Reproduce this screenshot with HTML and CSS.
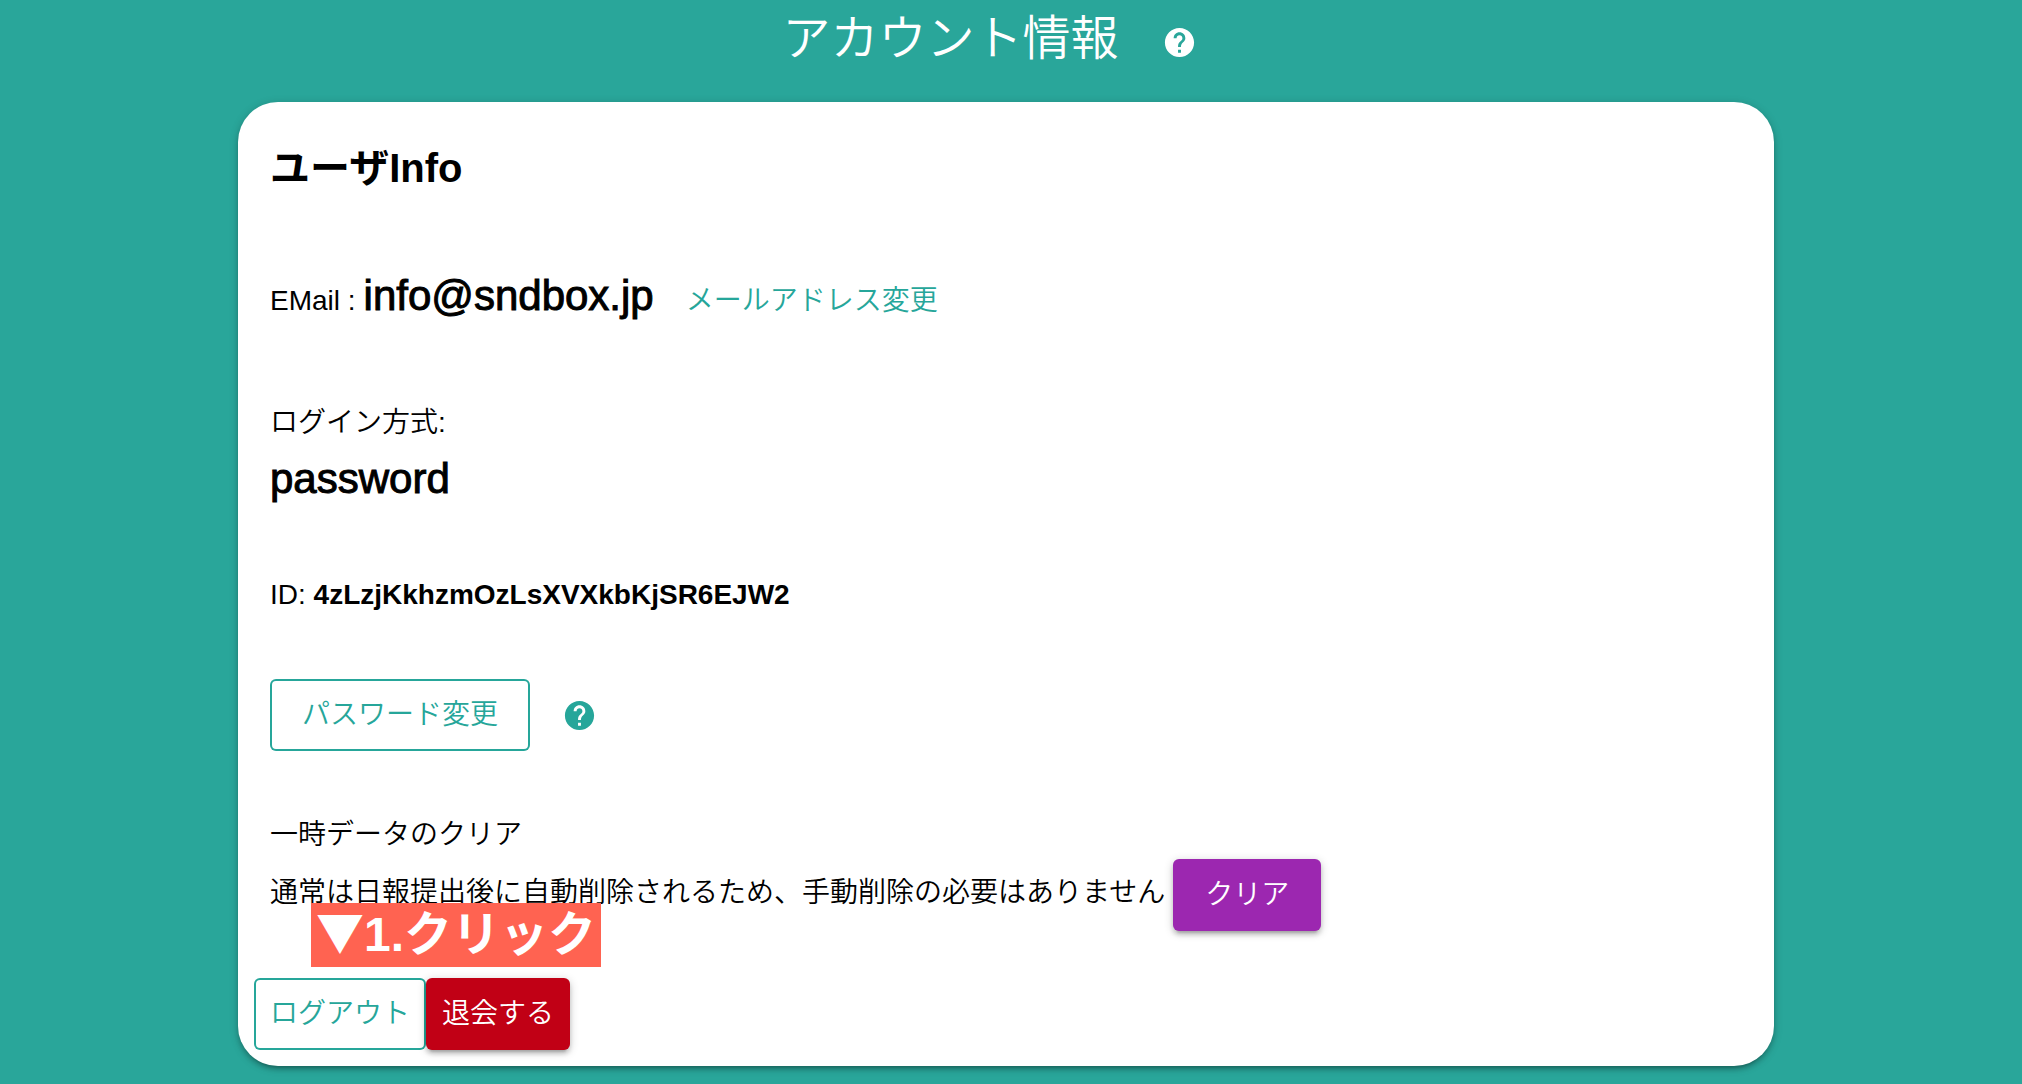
FILE: index.html
```html
<!DOCTYPE html>
<html lang="ja">
<head>
<meta charset="utf-8">
<meta name="viewport" content="width=device-width, initial-scale=1">
<title>アカウント情報</title>
<link rel="stylesheet" href="styles.css">
</head>
<body>
<svg class="sprite" aria-hidden="true">
  <symbol id="help" viewBox="0 0 24 24"><path d="M12 2C6.48 2 2 6.48 2 12s4.480 10 10 10 10-4.480 10-10S17.520 2 12 2zm1 17h-2v-2h2v2zm2.070-7.750l-.9.920C13.450 12.900 13 13.500 13 15h-2v-.5c0-1.100.450-2.100 1.170-2.830l1.240-1.260c.370-.360.590-.860.590-1.410 0-1.100-.9-2-2-2s-2 .9-2 2H8c0-2.210 1.790-4 4-4s4 1.790 4 4c0 .880-.360 1.680-.930 2.250z"/></symbol>
</svg>
<main class="page">
  <header class="page-header">
    <h1 class="page-title">アカウント情報</h1>
    <button class="help help-light" type="button" aria-label="ヘルプ"><svg class="icon"><use href="#help"/></svg></button>
  </header>
  <article class="card">
    <div class="card-body">
      <h2 class="card-title">ユーザInfo</h2>
      <div class="email">
        <span>EMail :</span>
        <span class="value">info@sndbox.jp</span>
        <a class="link" href="#email">メールアドレス変更</a>
      </div>
      <div class="login">
        <div>ログイン方式:</div>
        <div class="value">password</div>
      </div>
      <div class="user-id">ID: <strong class="id-value">4zLzjKkhzmOzLsXVXkbKjSR6EJW2</strong></div>
      <div class="password">
        <button class="button outline" type="button">パスワード変更</button>
        <button class="help help-teal" type="button" aria-label="ヘルプ"><svg class="icon"><use href="#help"/></svg></button>
      </div>
      <div class="clear-label">一時データのクリア</div>
      <div class="clear">
        <span class="clear-text">通常は日報提出後に自動削除されるため、手動削除の必要はありません</span>
        <button class="button accent" type="button">クリア</button>
      </div>
    </div>
    <footer class="actions">
      <button class="button outline compact" type="button">ログアウト</button>
      <button class="button danger compact" type="button">退会する</button>
      <div class="callout"><span class="marker">▼</span>1.クリック</div>
    </footer>
  </article>
</main>
</body>
</html>
```
FILE: styles.css
```css
* {
  box-sizing: border-box;
}

body {
  margin: 0;
  background: #29a69a;
  color: #000;
  font: 350 28px/56px "Liberation Sans", "Noto Sans CJK JP", sans-serif;
}

h1,
h2 {
  margin: 0;
}

.sprite {
  display: none;
}

.page {
  min-height: 100vh;
  padding: 0 10px 18px 0;
}

.page-header {
  display: flex;
  justify-content: center;
  align-items: flex-start;
  gap: 13px;
  height: 102px;
}

.page-title {
  margin-left: -3px;
  font-size: 48px;
  font-weight: 350;
  line-height: 78px;
  color: #fff;
}

.help {
  display: flex;
  padding: 0 30px;
  border: 0;
  background: none;
  cursor: pointer;
}

.help-light {
  padding-top: 25px;
  color: #fff;
}

.help-teal {
  padding: 0 32px;
  color: #26a69a;
}

.icon {
  width: 35px;
  height: 35px;
  fill: currentColor;
}

.card {
  width: 77%;
  max-width: 1536px;
  margin: 0 auto;
  border-radius: 40px;
  background: #fff;
  box-shadow: 0 2px 10px rgba(0, 0, 0, 0.2), 0 4px 4px rgba(0, 0, 0, 0.14), 0 6px 2px -4px rgba(0, 0, 0, 0.12);
}

.card-body {
  padding: 32px 32px 31px;
}

.card-title {
  font-size: 40px;
  font-weight: 700;
  line-height: 68px;
}

.email {
  display: flex;
  flex-wrap: wrap;
  align-items: baseline;
  gap: 8px;
  margin-top: 66px;
}

.value {
  font-size: 42px;
  -webkit-text-stroke: 1px currentColor;
}

.link {
  margin-left: 24px;
  color: #26a69a;
  text-decoration: none;
}

.login {
  margin-top: 66px;
}

.user-id {
  margin-top: 60px;
}

.id-value {
  font-weight: 700;
}

.password {
  display: flex;
  align-items: center;
  margin-top: 56px;
}

.clear-label {
  margin-top: 60px;
  line-height: 48px;
}

.clear {
  display: flex;
  align-items: flex-start;
  gap: 8px;
}

.clear-text {
  line-height: 68px;
}

.button {
  min-height: 72px;
  padding: 0 32px;
  border: 0;
  border-radius: 6px;
  font: inherit;
  white-space: nowrap;
  cursor: pointer;
}

.compact {
  padding: 0 16px;
}

.outline {
  background: #fff;
  color: #26a69a;
  box-shadow: inset 0 0 0 2px #26a69a;
}

.accent,
.danger {
  color: #fff;
  box-shadow: 0 2px 10px rgba(0, 0, 0, 0.2), 0 4px 4px rgba(0, 0, 0, 0.14), 0 6px 2px -4px rgba(0, 0, 0, 0.12);
}

.accent {
  background: #9c27b0;
}

.danger {
  background: #c10015;
}

.actions {
  position: relative;
  display: flex;
  padding: 16px;
}

/* Step marker that floats above the action buttons */
.callout {
  position: absolute;
  bottom: 100%;
  left: 73px;
  margin-bottom: -5px;
  padding: 0 5px;
  background: #ff6351;
  color: #fff;
  font-size: 48px;
  font-weight: 700;
  line-height: 64px;
  white-space: nowrap;
}

.marker {
  font-family: "Noto Sans CJK JP", sans-serif;
  line-height: 1;
}
```
